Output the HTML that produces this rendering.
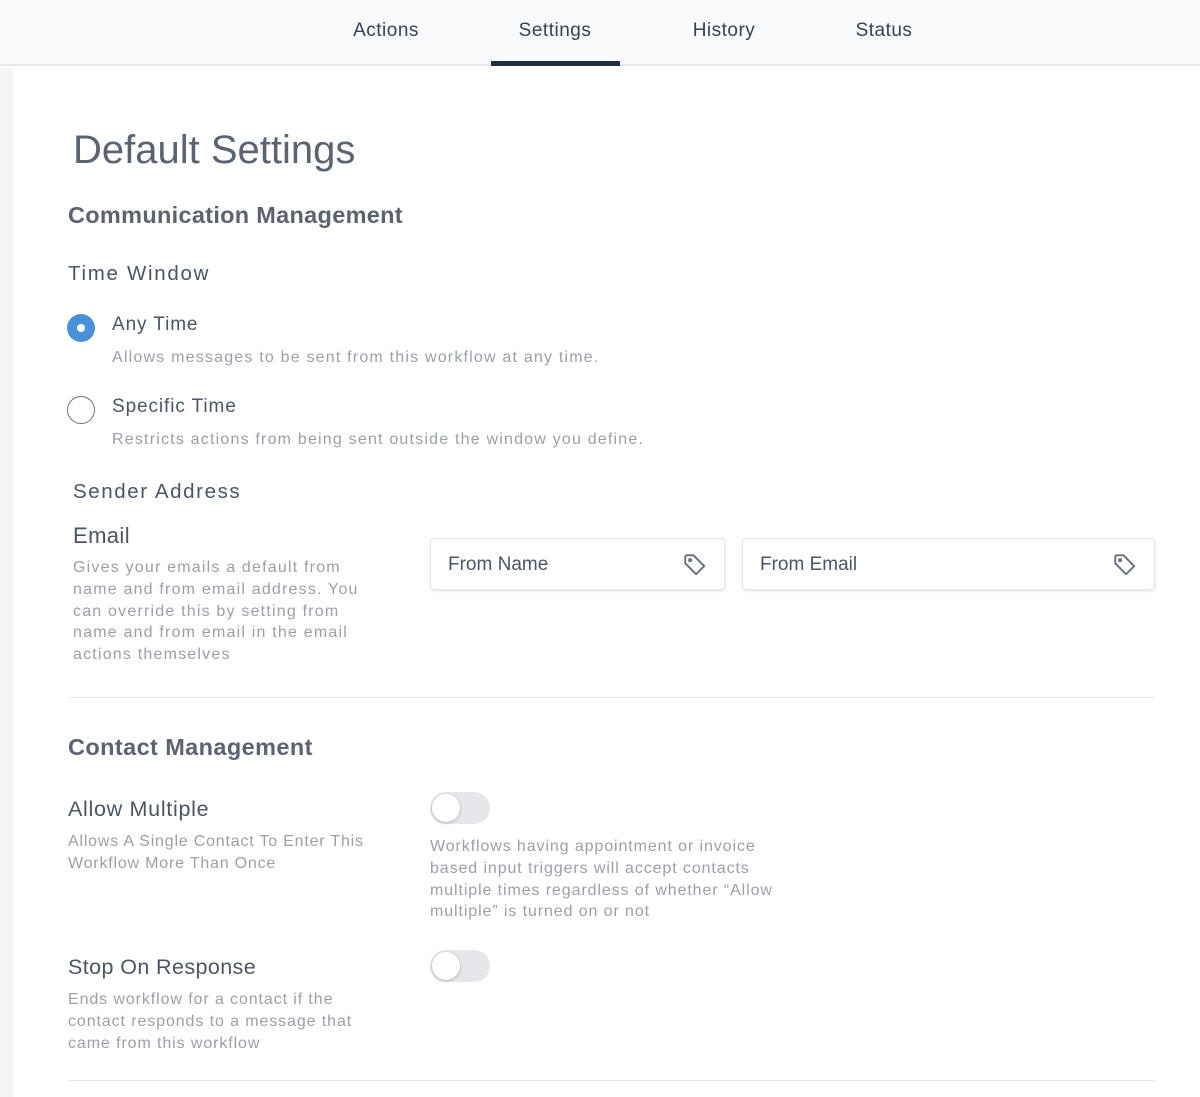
<!DOCTYPE html>
<html><head><meta charset="utf-8"><style>
*{margin:0;padding:0;box-sizing:border-box}
body{width:1200px;height:1097px;position:relative;overflow:hidden;background:#fff;font-family:"Liberation Sans",sans-serif;color:#4b5563}
.a{position:absolute;white-space:nowrap}
.nav{position:absolute;left:0;top:0;width:1200px;height:66px;background:#f8fafc;border-bottom:2px solid #e5e7eb}
.tab{position:absolute;top:19px;font-size:19px;line-height:24px;color:#374151;transform:translateX(-50%);letter-spacing:0.5px}
.strip{position:absolute;left:0;top:68px;width:13px;height:1029px;background:#f3f4f6}
.d{font-size:16px;color:#9a9fa8;letter-spacing:1.2px;line-height:21.8px}
.h{color:#4b5563}
.inp{position:absolute;height:52px;border:1px solid #e5e7eb;border-radius:4px;box-shadow:0 1px 3px rgba(0,0,0,.12);background:#fff}
.inp span{position:absolute;left:17px;top:14px;font-size:19px;line-height:24px;color:#4b5563}
.inp svg{position:absolute;right:16px;top:13px}
.tog{position:absolute;width:60px;height:32px;border-radius:16px;background:#e5e7eb}
.tog::after{content:"";position:absolute;left:2px;top:2px;width:28px;height:28px;border-radius:50%;background:#fff;box-shadow:0 1px 3px rgba(0,0,0,.25)}
.line{position:absolute;left:68px;width:1087px;height:1px;background:#e5e7eb}
</style></head><body>
<div class="nav">
<div class="tab" style="left:386px">Actions</div>
<div class="tab" style="left:555px">Settings</div>
<div class="tab" style="left:724px">History</div>
<div class="tab" style="left:884px">Status</div>
<div style="position:absolute;left:491px;top:61px;width:129px;height:5px;background:#1e2f3f"></div>
</div>
<div class="strip"></div>

<div class="a h" style="left:73px;top:127px;font-size:40px;line-height:46px;color:#5b6270">Default Settings</div>
<div class="a h" style="left:68px;top:201px;font-size:23.5px;line-height:28px;font-weight:bold;color:#5b6270;letter-spacing:0.3px">Communication Management</div>
<div class="a h" style="left:68px;top:262px;font-size:20.5px;line-height:24px;letter-spacing:1.7px">Time Window</div>

<div class="a" style="left:67px;top:314px;width:28px;height:28px;border-radius:50%;background:#4a90d6"></div>
<div class="a" style="left:77px;top:324px;width:8px;height:8px;border-radius:50%;background:#fff"></div>
<div class="a h" style="left:112px;top:313px;font-size:19px;line-height:24px;letter-spacing:0.9px">Any Time</div>
<div class="a d" style="left:112px;top:347px">Allows messages to be sent from this workflow at any time.</div>

<div class="a" style="left:67px;top:396px;width:28px;height:28px;border-radius:50%;border:1px solid #6b7280;background:#fff"></div>
<div class="a h" style="left:112px;top:395px;font-size:19px;line-height:24px;letter-spacing:0.9px">Specific Time</div>
<div class="a d" style="left:112px;top:429px">Restricts actions from being sent outside the window you define.</div>

<div class="a h" style="left:73px;top:480px;font-size:20.5px;line-height:24px;letter-spacing:1.6px">Sender Address</div>
<div class="a h" style="left:73px;top:523px;font-size:22px;line-height:26px;letter-spacing:0.4px">Email</div>
<div class="a d" style="left:73px;top:557px">Gives your emails a default from<br>name and from email address. You<br>can override this by setting from<br>name and from email in the email<br>actions themselves</div>

<div class="inp" style="left:430px;top:538px;width:295px"><span>From Name</span>
<svg width="26" height="26" viewBox="0 0 24 24" fill="none" stroke="#6b7280" stroke-width="1.8" stroke-linejoin="round"><path d="M3 4v6.5l10 10 7.5-7.5-10-10H4z"/><circle cx="7.5" cy="7.5" r="1" fill="#6b7280"/></svg></div>
<div class="inp" style="left:742px;top:538px;width:413px"><span>From Email</span>
<svg width="26" height="26" viewBox="0 0 24 24" fill="none" stroke="#6b7280" stroke-width="1.8" stroke-linejoin="round"><path d="M3 4v6.5l10 10 7.5-7.5-10-10H4z"/><circle cx="7.5" cy="7.5" r="1" fill="#6b7280"/></svg></div>

<div class="line" style="top:697px"></div>

<div class="a h" style="left:68px;top:733px;font-size:23.5px;line-height:28px;font-weight:bold;color:#5b6270;letter-spacing:0.4px">Contact Management</div>
<div class="a h" style="left:68px;top:796px;font-size:21.5px;line-height:26px;letter-spacing:0.7px">Allow Multiple</div>
<div class="a d" style="left:68px;top:831px;letter-spacing:0.8px">Allows A Single Contact To Enter This<br>Workflow More Than Once</div>
<div class="tog" style="left:430px;top:792px"></div>
<div class="a d" style="left:430px;top:836px;letter-spacing:0.9px">Workflows having appointment or invoice<br>based input triggers will accept contacts<br>multiple times regardless of whether “Allow<br>multiple” is turned on or not</div>

<div class="a h" style="left:68px;top:954px;font-size:21.5px;line-height:26px;letter-spacing:0.4px">Stop On Response</div>
<div class="a d" style="left:68px;top:989px;letter-spacing:0.9px">Ends workflow for a contact if the<br>contact responds to a message that<br>came from this workflow</div>
<div class="tog" style="left:430px;top:950px"></div>

<div class="line" style="top:1080px"></div>
</body></html>
